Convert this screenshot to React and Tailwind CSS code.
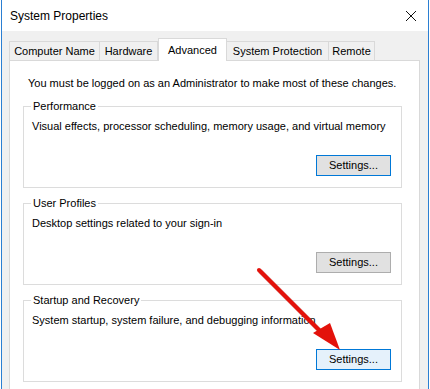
import React from "react";

const tabs = [
  { label: "Computer Name", w: "w-[91px]" },
  { label: "Hardware", w: "w-[58px]" },
  { label: "Advanced", w: "w-[69px]" },
  { label: "System Protection", w: "w-[102px]" },
  { label: "Remote", w: "w-[46px]" },
];

const groups = [
  {
    title: "Performance",
    text: "Visual effects, processor scheduling, memory usage, and virtual memory",
    button: "focused",
  },
  {
    title: "User Profiles",
    text: "Desktop settings related to your sign-in",
    button: "normal",
  },
  {
    title: "Startup and Recovery",
    text: "System startup, system failure, and debugging information",
    button: "hover",
  },
];

const buttonStyles = {
  focused: "border-[#0078d7] bg-[#e1e1e1]",
  normal: "border-[#adadad] bg-[#e1e1e1]",
  hover: "border-[#0078d7] bg-[#e5f1fb]",
};

const GroupBox = ({ group }) => (
  <fieldset className="mt-[8px] border border-[#dcdcdc] pl-[7px] pr-[10px] pb-[11px]">
    <legend className="px-[2px] leading-[15px]">{group.title}</legend>
    <p className="mt-[5px] whitespace-nowrap pl-[1px] leading-[15px]">{group.text}</p>
    <div className="mt-[21px] flex justify-end">
      <button
        className={`h-[21px] w-[75px] border leading-[19px] ${buttonStyles[group.button]}`}
      >
        Settings...
      </button>
    </div>
  </fieldset>
);

const App = () => {
  return (
    <div
      className="relative h-[389px] w-[430px] overflow-hidden bg-white text-[11px] text-black"
      style={{ fontFamily: '"Liberation Sans", Arial, sans-serif' }}
    >
      <div className="ml-[1px] h-full w-[428px] border-x border-[#2b7fd2] bg-[#f0f0f0]">
        {/* title bar */}
        <div className="flex h-[31px] items-center justify-between bg-white pl-[8px] pr-[10px]">
          <span className="text-[12px]">System Properties</span>
          <svg width="12" height="12" viewBox="0 0 12 12" className="mr-[1px]">
            <path d="M1 1 L11 11 M11 1 L1 11" stroke="#111" strokeWidth="1" />
          </svg>
        </div>

        <div className="pl-[7px] pr-[8px] pt-[7px]">
          {/* tabs */}
          <div className="flex h-[22px] items-end">
            {tabs.map((t, i) => {
              const active = t.label === "Advanced";
              return active ? (
                <div
                  key={t.label}
                  className={`relative z-10 -mb-[1px] flex h-[23px] justify-center border border-b-0 border-[#d9d9d9] bg-white pt-[3px] ${t.w}`}
                >
                  {t.label}
                </div>
              ) : (
                <div
                  key={t.label}
                  className={`flex h-[19px] items-center justify-center border-t border-r border-[#d9d9d9] bg-[#f0f0f0] ${
                    i === 0 ? "border-l" : ""
                  } ${t.w}`}
                >
                  {t.label}
                </div>
              );
            })}
          </div>

          {/* panel */}
          <div className="h-[340px] border border-[#d9d9d9] bg-white pl-[13px] pr-[17px] pt-[15px]">
            <p className="whitespace-nowrap pl-[5px] leading-[15px]">
              You must be logged on as an Administrator to make most of these changes.
            </p>
            <div>
              {groups.map((g) => (
                <GroupBox key={g.title} group={g} />
              ))}
            </div>
          </div>
        </div>
      </div>

      {/* red annotation arrow */}
      <svg className="pointer-events-none absolute left-0 top-0" width="430" height="389">
        <line x1="259" y1="270" x2="326" y2="337" stroke="#7a2020" strokeOpacity="0.25" strokeWidth="5" transform="translate(1 1)" />
        <line x1="259" y1="270" x2="326" y2="337" stroke="#e3120b" strokeWidth="4" strokeLinecap="round" />
        <polygon points="340,350 313,333 330,323" fill="#e3120b" />
      </svg>
    </div>
  );
};

export default App;
